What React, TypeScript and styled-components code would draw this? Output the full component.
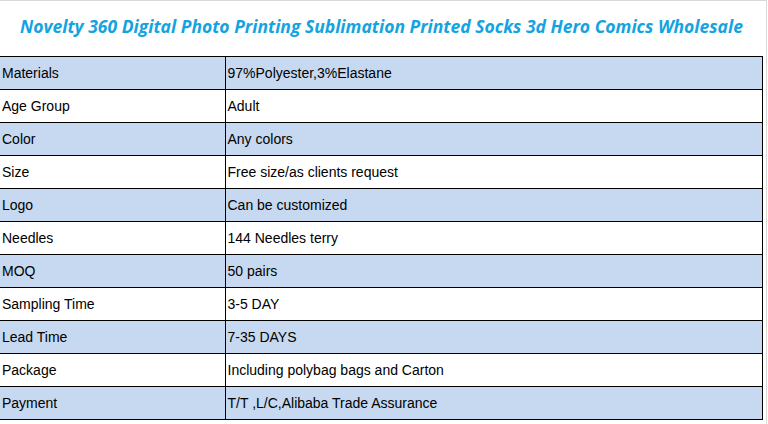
import styled, { createGlobalStyle } from "styled-components";

const GlobalStyle = createGlobalStyle`
  html, body {
    margin: 0;
    padding: 0;
    background: #ffffff;
  }
`;

const Sheet = styled.div`
  width: 766px;
  height: 424px;
  border-top: 1px solid #d9d9d9;
  border-right: 1px solid #d9d9d9;
  overflow: hidden;
`;

const Title = styled.h1`
  margin: 0;
  width: 763px;
  height: 55px;
  display: flex;
  align-items: center;
  justify-content: center;
  font-family: "Open Sans", Lato, sans-serif;
  font-style: italic;
  font-weight: 700;
  font-size: 17.5px;
  color: #14a3e1;
  padding-bottom: 5px;
  box-sizing: border-box;
  white-space: nowrap;
`;

const Table = styled.table`
  width: 763px;
  border-collapse: collapse;
  table-layout: fixed;
  font-family: "Liberation Sans", Arial, sans-serif;
  font-size: 14px;
  color: #000;
`;

const Row = styled.tr<{ $shaded: boolean }>`
  height: 33px;
  background: ${(p) => (p.$shaded ? "#c6d9f0" : "#ffffff")};
`;

const Cell = styled.td`
  border-top: 1px solid #000;
  border-bottom: 1px solid #000;
  border-right: 1px solid #000;
  padding: 0 2px;
  vertical-align: middle;
  white-space: nowrap;
  height: 32px;
  box-sizing: border-box;

  &:first-child {
    width: 225px;
  }
`;

const specs: [string, string][] = [
  ["Materials", "97%Polyester,3%Elastane"],
  ["Age Group", "Adult"],
  ["Color", "Any colors"],
  ["Size", "Free size/as clients request"],
  ["Logo", "Can be customized"],
  ["Needles", "144 Needles terry"],
  ["MOQ", "50 pairs"],
  ["Sampling Time", "3-5 DAY"],
  ["Lead Time", "7-35 DAYS"],
  ["Package", "Including polybag bags and Carton"],
  ["Payment", "T/T ,L/C,Alibaba Trade Assurance"],
];

const App: React.FC = () => {
  return (
    <>
      <GlobalStyle />
      <Sheet>
        <Title>
          Novelty 360 Digital Photo Printing Sublimation Printed Socks 3d Hero
          Comics Wholesale
        </Title>
        <Table>
          <tbody>
            {specs.map(([label, value], i) => (
              <Row key={label} $shaded={i % 2 === 0}>
                <Cell>{label}</Cell>
                <Cell>{value}</Cell>
              </Row>
            ))}
          </tbody>
        </Table>
      </Sheet>
    </>
  );
};

export default App;
